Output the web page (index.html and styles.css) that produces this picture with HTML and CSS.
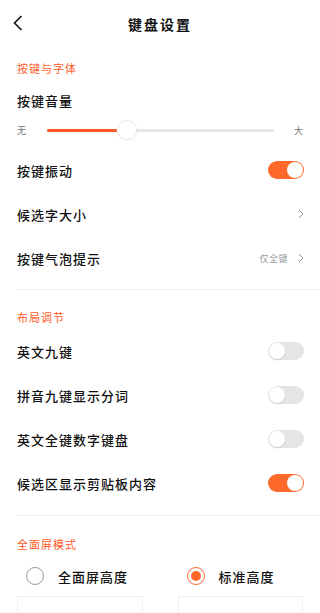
FILE: index.html
```html
<!DOCTYPE html>
<html>
<head>
<meta charset="UTF-8">
<title>键盘设置</title>
<link rel="stylesheet" href="styles.css">
</head>
<body>

<header class="topbar">
  <svg class="back" width="10" height="16" viewBox="0 0 10 16"><polyline points="8.5,1 1.5,8 8.5,15" fill="none" stroke="#111" stroke-width="1.6"/></svg>
  <div class="pageTitle">键盘设置</div>
</header>

<div class="section">
  <div class="secTitle">按键与字体</div>

  <div class="volume">
    <div class="label">按键音量</div>
    <div class="sliderRow">
      <span class="tick">无</span>
      <div class="track">
        <div class="fill" style="width:31%"></div>
        <div class="knob" style="left:31%"></div>
      </div>
      <span class="tick">大</span>
    </div>
  </div>

  <div class="row">
    <div class="label">按键振动</div>
    <div class="switch on"><i></i></div>
  </div>
  <div class="row">
    <div class="label">候选字大小</div>
    <svg class="chev" width="6" height="10" viewBox="0 0 6 10"><polyline points="1,1 5,5 1,9" fill="none" stroke="#999" stroke-width="1"/></svg>
  </div>
  <div class="row">
    <div class="label">按键气泡提示</div>
    <div class="value">仅全键
      <svg class="chev" width="6" height="10" viewBox="0 0 6 10"><polyline points="1,1 5,5 1,9" fill="none" stroke="#999" stroke-width="1"/></svg>
    </div>
  </div>
</div>

<div class="section second">
  <div class="secTitle">布局调节</div>
  <div class="row">
    <div class="label">英文九键</div>
    <div class="switch"><i></i></div>
  </div>
  <div class="row">
    <div class="label">拼音九键显示分词</div>
    <div class="switch"><i></i></div>
  </div>
  <div class="row">
    <div class="label">英文全键数字键盘</div>
    <div class="switch"><i></i></div>
  </div>
  <div class="row">
    <div class="label">候选区显示剪贴板内容</div>
    <div class="switch on"><i></i></div>
  </div>
</div>

<div class="section third">
  <div class="secTitle">全面屏模式</div>
  <div class="modes">
    <div class="mode">
      <div class="radioRow"><span class="radio"></span><span class="label">全面屏高度</span></div>
      <div class="preview"></div>
    </div>
    <div class="mode">
      <div class="radioRow"><span class="radio checked"></span><span class="label">标准高度</span></div>
      <div class="preview"></div>
    </div>
  </div>
</div>

</body>
</html>
```

FILE: styles.css
```css
html,body{
  height:613px;
  overflow:hidden;
}

body{
  margin:0;
  background:#fff;
  font-family:"Noto Sans CJK SC","Noto Sans",sans-serif;
  color:#111;
}

.topbar{
  height:48px;
  display:flex;
  align-items:center;
  justify-content:center;
  position:relative;
}

.back{
  position:absolute;
  left:13px;
  top:15px;
}

.pageTitle{
  font-size:14px;
  font-weight:700;
  letter-spacing:2px;
}

.section{
  margin-left:16px;
  padding:8px 16px 9px 1px;
  border-bottom:1px solid #efefef;
}

.second{
  padding-top:15px;
  padding-bottom:10px;
}

.third{
  padding-top:16px;
  border-bottom:none;
}

.secTitle{
  height:24px;
  line-height:24px;
  font-size:11px;
  letter-spacing:1px;
  color:#ff5a1f;
}

.label{
  font-size:13px;
  font-weight:500;
  letter-spacing:1px;
}

.volume{
  padding-top:9px;
  padding-bottom:6px;
}

.volume .label{
  height:24px;
  line-height:24px;
}

.sliderRow{
  margin-top:5px;
  height:24px;
  display:flex;
  align-items:center;
}

.tick{
  font-size:9px;
  color:#777;
  width:10px;
}

.track{
  flex:1;
  height:3px;
  margin:0 20px;
  background:#e6e6e6;
  border-radius:2px;
  position:relative;
}

.fill{
  height:3px;
  background:#ff5722;
  border-radius:2px;
}

.knob{
  position:absolute;
  top:-9px;
  width:20px;
  height:20px;
  border-radius:50%;
  background:#fff;
  border:1px solid #ececec;
  box-sizing:border-box;
  box-shadow:0 1px 2px rgba(0,0,0,0.06);
}

.row{
  height:44px;
  display:flex;
  align-items:center;
  justify-content:space-between;
}

.value{
  display:flex;
  align-items:center;
  font-size:9px;
  letter-spacing:0.5px;
  color:#999;
  gap:10px;
}

.switch{
  width:36px;
  height:18px;
  border-radius:9px;
  background:#e5e5e8;
  position:relative;
}

.switch i{
  position:absolute;
  left:1px;
  top:1px;
  width:16px;
  height:16px;
  border-radius:50%;
  background:#fff;
  box-shadow:0 1px 2px rgba(0,0,0,0.12);
}

.switch.on{
  background:#ff6a2b;
}

.switch.on i{
  left:19px;
  box-shadow:none;
}

.modes{
  display:grid;
  grid-template-columns:1fr 1fr;
  gap:35px;
  padding-right:1px;
}

.radioRow{
  height:40px;
  display:flex;
  align-items:center;
  padding-left:9px;
  gap:14px;
}

.radio{
  width:18px;
  height:18px;
  border-radius:50%;
  border:1px solid #999;
  box-sizing:border-box;
  position:relative;
}

.radio.checked{
  border-color:#ff6a2b;
}

.radio.checked:after{
  content:"";
  position:absolute;
  left:3px;
  top:3px;
  width:10px;
  height:10px;
  border-radius:50%;
  background:#ff6a2b;
}

.preview{
  height:80px;
  border:1px solid #f0f0f0;
}
```
